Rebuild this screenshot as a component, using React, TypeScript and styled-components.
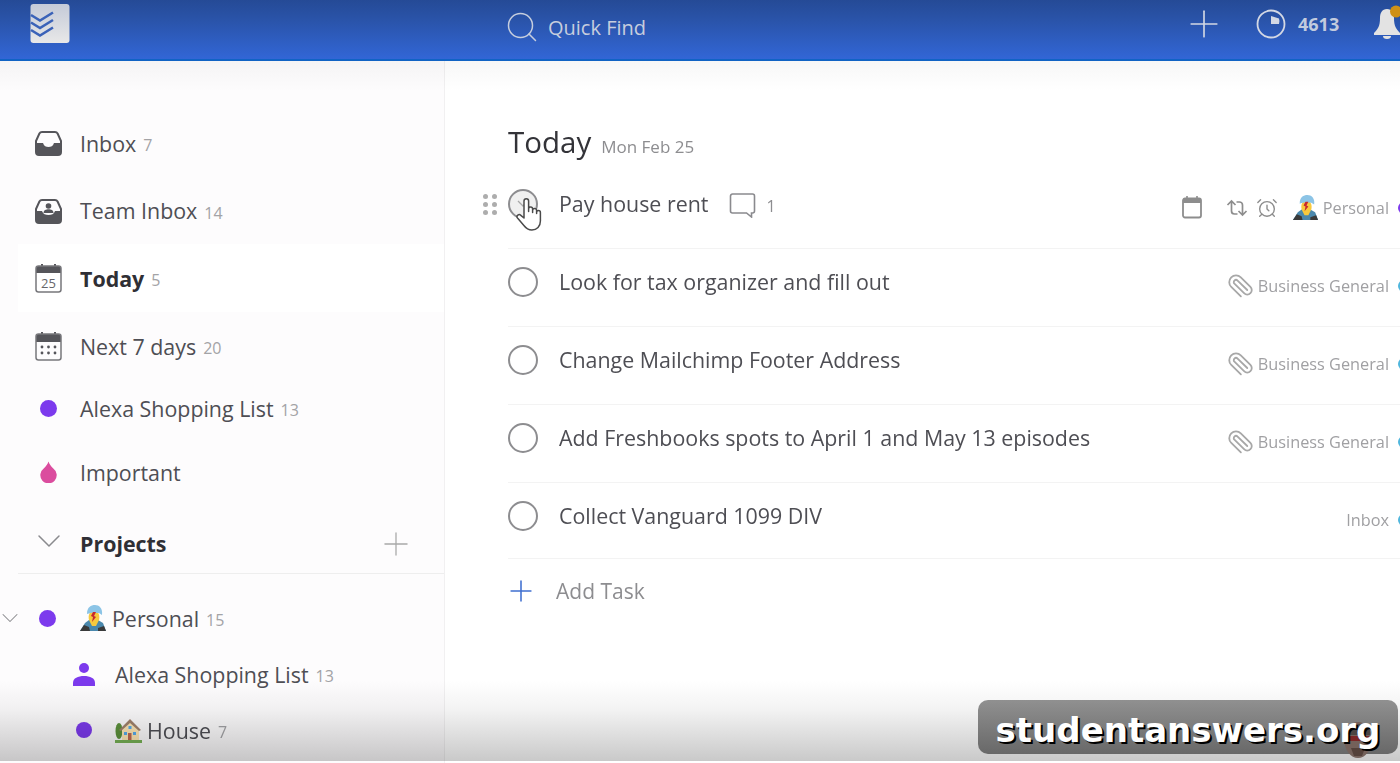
import React from "react";
import styled, { createGlobalStyle } from "styled-components";
import { AlarmClock, ChevronDown, Paperclip, Plus, Search } from "lucide-react";

const GlobalStyle = createGlobalStyle`
  html, body {
    margin: 0;
    padding: 0;
    height: 100%;
    overflow: hidden;
    background: #fff;
    font-family: "Open Sans", "Noto Sans", sans-serif;
  }
  svg {
    flex: none;
  }
`;

// drawings
const InboxIcon = () => (
  <svg width="27" height="26" viewBox="0 0 27 26">
    <path d="M7 2h13a3 3 0 0 1 2.6 1.5L26 11v11a3 3 0 0 1-3 3H4a3 3 0 0 1-3-3V11l3.4-7.5A3 3 0 0 1 7 2z" fill="none" stroke="#55555a" strokeWidth="2" />
    <path d="M1 13h7c1 3 3 4 5.500 4s4.500-1 5.500-4h7v9a3 3 0 0 1-3 3H4a3 3 0 0 1-3-3z" fill="#55555a" />
  </svg>
);

const TeamInboxIcon = () => (
  <svg width="27" height="26" viewBox="0 0 27 26">
    <path d="M7 2h13a3 3 0 0 1 2.600 1.500L26 11v11a3 3 0 0 1-3 3H4a3 3 0 0 1-3-3V11l3.400-7.500A3 3 0 0 1 7 2z" fill="none" stroke="#55555a" strokeWidth="2" />
    <path d="M1 13h6c1 3 3.500 4 6.500 4s5.500-1 6.500-4h6v9a3 3 0 0 1-3 3H4a3 3 0 0 1-3-3z" fill="#55555a" />
    <circle cx="13.500" cy="8" r="2.800" fill="#55555a" />
    <path d="M8.500 15c0-3 2.500-3.800 5-3.800s5 .8 5 3.800z" fill="#55555a" />
  </svg>
);

const TodayIcon = () => (
  <svg width="27" height="30" viewBox="0 0 27 30">
    <path d="M7 1v4M20 1v4" stroke="#55555a" strokeWidth="2" />
    <path d="M3 3h21a2 2 0 0 1 2 2v5H1V5a2 2 0 0 1 2-2z" fill="#55555a" />
    <rect x="1" y="3" width="25" height="26" rx="2.500" fill="none" stroke="#77777b" strokeWidth="1.500" />
    <text x="13.500" y="25" textAnchor="middle" fontFamily="Open Sans, sans-serif" fontSize="13" fill="#66666a">25</text>
  </svg>
);

const WeekIcon = () => (
  <svg width="27" height="30" viewBox="0 0 27 30">
    <path d="M7 1v4M20 1v4" stroke="#55555a" strokeWidth="2" />
    <path d="M3 3h21a2 2 0 0 1 2 2v6H1V5a2 2 0 0 1 2-2z" fill="#55555a" />
    <rect x="1" y="3" width="25" height="26" rx="2.500" fill="none" stroke="#77777b" strokeWidth="1.500" />
    {[7, 13.500, 20].map((x) =>
      [16, 22].map((y) => <circle key={`${x}-${y}`} cx={x} cy={y} r="1.400" fill="#55555a" />)
    )}
  </svg>
);

const Drop = () => (
  <svg width="17" height="22" viewBox="0 0 17 22">
    <path d="M8.500 0.500c1 3 2.200 4.300 4.800 7A8.200 8.200 0 1 1 3.700 7.500C6.300 4.800 7.500 3.500 8.500 0.500z" fill="#db4c9e" />
  </svg>
);

const PersonGlyph = () => (
  <svg width="24" height="24" viewBox="0 0 24 24">
    <circle cx="12" cy="6" r="5" fill="#7c3aed" />
    <path d="M1 24v-3c0-5 5-7 11-7s11 2 11 7v3z" fill="#7c3aed" />
  </svg>
);

const PersonEmoji = ({ size }: { size: number }) => (
  <svg width={size} height={size} viewBox="0 0 28 28">
    <path d="M1 27l5-8 4-3h9l5 3 3 8z" fill="#4a88ad" />
    <path d="M1 27l4-6 5 2 1 4z" fill="#3a3a3a" />
    <path d="M27 27l-2-5-6 2v3z" fill="#3a3a3a" />
    <path d="M10 16c-1-4 0-9 5-9s6 5 5 9l-3 6h-4z" fill="#f7c93e" />
    <path d="M8 10C8 3 12 1 16 1s8 3 7 10l-3-2c-3 0-7-1-12 1z" fill="#8cc4e6" />
    <path d="M14 8l3 0-2 4 2 1-4 5 1-5-2-1z" fill="#c8282d" />
  </svg>
);

const HouseEmoji = () => (
  <svg width="27" height="25" viewBox="0 0 27 25">
    <ellipse cx="4" cy="13" rx="3.500" ry="8" fill="#5c913b" />
    <path d="M7 23V11l8-8 9 8v12z" fill="#ffe8b6" />
    <path d="M4 12L15 1l11 11-2 1-9-8-9 8z" fill="#a0826d" />
    <rect x="13" y="15" width="3.500" height="8" fill="#c1694f" />
    <rect x="9" y="14" width="3" height="3" fill="#55acee" />
    <rect x="18" y="14" width="3" height="3" fill="#55acee" />
    <rect x="13.500" y="8" width="3" height="3" fill="#55acee" />
    <rect x="0" y="22" width="27" height="3" fill="#77b255" />
  </svg>
);

const Logo = () => (
  <svg width="40" height="39" viewBox="0 0 40 39">
    <defs>
      <linearGradient id="logoFill" x1="0" y1="0" x2="0" y2="1">
        <stop offset="0" stopColor="#c4cad8" />
        <stop offset="1" stopColor="#e8e8e8" />
      </linearGradient>
    </defs>
    <rect x="0.500" y="0" width="39" height="39" rx="3" fill="url(#logoFill)" />
    <path d="M1 11l9 5.500 13-8M1 18.500l9 5.500 13-8M1 26l9 5.500 13-8" fill="none" stroke="#3a62b8" strokeWidth="2.600" />
  </svg>
);

const KarmaIcon = () => (
  <svg width="30" height="30" viewBox="0 0 30 30">
    <circle cx="15" cy="15" r="13.500" fill="none" stroke="#d3d8e4" strokeWidth="1.800" />
    <path d="M15 7l8 2.500a8 8 0 0 1 0 5.500h-8z" fill="#d3d8e4" />
  </svg>
);

const BellIcon = () => (
  <svg width="26" height="34" viewBox="0 -4 26 34">
    <path d="M13 0c5 0 7 4 7 9 0 8 2 11 6 15v2H0v-2c4-4 6-7 6-15 0-5 2-9 7-9z" fill="#e3e3e3" />
    <path d="M9 27h8a4 3 0 0 1-8 0z" fill="#e3e3e3" />
    <circle cx="22" cy="2.500" r="6" fill="#cf9117" />
  </svg>
);

const CalendarIcon = () => (
  <svg width="20" height="23" viewBox="0 0 20 23">
    <path d="M5 0v3M15 0v3" stroke="#8d8d8d" strokeWidth="1.600" />
    <rect x="1" y="2.500" width="18" height="19" rx="2" fill="none" stroke="#8d8d8d" strokeWidth="1.800" />
    <rect x="1" y="2.500" width="18" height="4.500" fill="#8d8d8d" />
  </svg>
);

const RepeatIcon = () => (
  <svg width="22" height="18" viewBox="0 0 22 18">
    <path d="M1.500 6l4-4 4 4M5.500 2v10a3 3 0 0 0 3 3h3M20.500 12l-4 4-4-4M16.500 16V6a3 3 0 0 0-3-3h-3" fill="none" stroke="#8d8d8d" strokeWidth="1.700" />
  </svg>
);

const CommentIcon = () => (
  <svg width="27" height="25" viewBox="0 0 27 25">
    <path d="M3.500 1h20a2 2 0 0 1 2 2v15a2 2 0 0 1-2 2h-1v4l-5-4h-14a2 2 0 0 1-2-2V3a2 2 0 0 1 2-2z" fill="none" stroke="#8a8a8e" strokeWidth="1.600" />
  </svg>
);

const HandIcon = () => (
  <svg width="26" height="34" viewBox="0 0 26 34">
    <path
      d="M8 21V4a2.300 2.300 0 0 1 4.600 0v10.500V12a2 2 0 0 1 4 0v3.500V13.500a2 2 0 0 1 4 0v3V15.500a1.900 1.900 0 0 1 3.800 0V24c0 5.500-3.500 9-8.500 9-4 0-6-1.800-8-4.500L1.500 21a2.100 2.100 0 0 1 3.300-2.600z"
      fill="#fff"
      stroke="#4a4a4a"
      strokeWidth="1.500"
      strokeLinejoin="round"
    />
  </svg>
);

const Face = () => (
  <svg width="28" height="37" viewBox="0 0 28 37">
    <ellipse cx="14" cy="19" rx="13.500" ry="18" fill="#74615a" />
    <path d="M2 9C6 1 22 1 26 9L26 14H2z" fill="#4c4542" />
    <rect x="3" y="15" width="22" height="5" fill="#7c2525" />
    <path d="M7 27h14l-3 8h-8z" fill="#54413a" />
  </svg>
);

// header
const Frame = styled.div`
  display: flex;
  flex-direction: column;
  height: 100%;
  filter: blur(0.4px);
`;

const Header = styled.header`
  flex: none;
  height: 61px;
  box-sizing: border-box;
  border-bottom: 2px solid #1163c4;
  background: linear-gradient(#254a96, #2a54aa 35%, #3266d6);
  display: flex;
  align-items: center;
  overflow: hidden;
  padding-bottom: 5px;
`;

const LogoSlot = styled.div`
  flex: none;
  align-self: flex-start;
  width: 504px;
  box-sizing: border-box;
  padding: 4px 0 0 30px;
  display: flex;
`;

const SearchBox = styled.div`
  flex: 1;
  display: flex;
  align-items: center;
  gap: 8px;
  color: #c6cede;
  font-size: 20px;
`;

const HeaderTools = styled.div`
  flex: none;
  width: 218px;
  padding-bottom: 6px;
  display: flex;
  align-items: center;
  color: #d3d8e4;
`;

const KarmaCount = styled.span`
  margin-left: 12px;
  margin-right: 35px;
  font-size: 18px;
  font-weight: 700;
  color: #c2cbde;
`;

const AddGap = styled.span`
  display: flex;
  margin-right: 30px;
`;

const BellSlot = styled.span`
  display: flex;
  margin-bottom: 4px;
`;

// page
const Page = styled.div`
  width: 1400px;
  height: 763px;
  position: relative;
  overflow: hidden;
  background: #fff;
`;

const Body = styled.div`
  flex: 1;
  display: flex;
  min-height: 0;
  position: relative;
`;

const Sidebar = styled.nav`
  flex: none;
  width: 445px;
  height: 100%;
  padding-top: 48px;
  box-sizing: border-box;
  background: #fdfcfd;
  border-right: 1px solid #f1f0f1;
`;

const NavRow = styled.div<{ $h: number; $left?: number; $active?: boolean }>`
  height: ${(p) => p.$h}px;
  display: flex;
  align-items: center;
  padding-left: ${(p) => (p.$active ? 17 : p.$left ?? 35)}px;
  margin-left: ${(p) => (p.$active ? 18 : 0)}px;
  background: ${(p) => (p.$active ? "#ffffff" : "transparent")};
`;

const IconSlot = styled.span`
  flex: none;
  width: 27px;
  margin-right: 18px;
  display: flex;
  align-items: center;
  justify-content: center;
`;

const SubSlot = styled(IconSlot)`
  width: 24px;
  margin-right: 19px;
`;

const Dot = styled.span<{ $size?: number }>`
  display: block;
  width: ${(p) => p.$size ?? 17}px;
  height: ${(p) => p.$size ?? 17}px;
  border-radius: 50%;
  background: #7c3aed;
`;

const TreeChevron = styled.span`
  flex: none;
  width: 17px;
  margin-right: 16px;
  display: flex;
  justify-content: center;
  color: #8a8a8e;
`;

const Label = styled.span<{ $bold?: boolean }>`
  font-size: 21.4px;
  font-weight: ${(p) => (p.$bold ? 700 : 400)};
  color: ${(p) => (p.$bold ? "#2f2f35" : "#4e4e54")};
  white-space: nowrap;
`;

const Count = styled.span`
  margin-left: 7px;
  font-size: 16px;
  padding-top: 4px;
  color: #a3a3a6;
`;

const ProjectsRow = styled.div`
  height: 60px;
  margin: 6px 0 16px 18px;
  padding: 0 29px 0 17px;
  box-sizing: border-box;
  display: flex;
  align-items: center;
  border-bottom: 1px solid #eeeeee;
  color: #8a8a8e;
`;

const ProjectsChevron = styled.span`
  flex: none;
  width: 27px;
  margin-right: 18px;
  margin-top: -6px;
  display: flex;
  justify-content: center;
`;

const Spacer = styled.span`
  flex: 1;
`;

const EmojiLabel = styled.span`
  display: flex;
  margin-right: 5px;
`;

// main list
const Main = styled.main`
  flex: 1;
  min-width: 0;
  padding: 60px 0 0 63px;
  overflow: hidden;
`;

const TitleRow = styled.div`
  display: flex;
  align-items: baseline;
  gap: 10px;
  height: 50px;
`;

const Title = styled.h1`
  margin: 0;
  font-size: 29.500px;
  font-weight: 400;
  color: #333338;
`;

const TitleDate = styled.span`
  font-size: 17px;
  color: #8d8d90;
`;

const Task = styled.div<{ $h: number }>`
  width: 900px;
  height: ${(p) => p.$h}px;
  padding-bottom: ${(p) => p.$h - 66}px;
  box-sizing: border-box;
  display: flex;
  align-items: center;
  border-bottom: 1px solid #f3f3f3;
  position: relative;
`;

const Check = styled.span`
  flex: none;
  width: 26px;
  height: 26px;
  margin-right: 21px;
  border: 2px solid #8d8d90;
  border-radius: 50%;
  display: flex;
  align-items: center;
  justify-content: center;
`;

const HoverCheck = styled(Check)`
  background: #f0f0f0;
  color: #a8a8a8;
`;

const TaskText = styled.span`
  font-size: 21.4px;
  color: #4e4e54;
  white-space: nowrap;
`;

const Comment = styled.span`
  margin-left: 21px;
  margin-top: 4px;
  display: flex;
  align-items: center;
  gap: 10px;
  color: #8d8d90;
  font-size: 16px;
`;

const Meta = styled.span`
  margin-left: auto;
  margin-right: 9px;
  padding-top: 8px;
  display: flex;
  align-items: center;
  color: #a0a0a3;
  font-size: 16.300px;
  white-space: nowrap;
`;

const MetaDot = styled.span<{ $color: string }>`
  flex: none;
  width: 12px;
  height: 12px;
  margin: 8px -2px 0 0;
  border-radius: 50%;
  background: ${(p) => p.$color};
`;

const MetaIcon = styled.span<{ $gap: number }>`
  display: flex;
  margin-right: ${(p) => p.$gap}px;
`;

const ClipTurn = styled.span`
  display: flex;
  transform: rotate(90deg);
`;

const Grip = styled.span`
  position: absolute;
  left: -25px;
  top: 23px;
  display: grid;
  grid-template-columns: 5px 5px;
  gap: 3px 4px;
`;

const GripDot = styled.span`
  width: 5px;
  height: 5px;
  border-radius: 50%;
  background: #adadad;
`;

const Hand = styled.span`
  position: absolute;
  left: 8px;
  top: 26px;
  display: flex;
`;

const AddTaskRow = styled.div`
  height: 64px;
  display: flex;
  align-items: center;
  gap: 18px;
  color: #8d8d90;
  font-size: 21px;
`;

const AddIcon = styled.span`
  display: flex;
  margin-left: -4px;
  color: #3f6fd0;
`;

// video frame on top
const TopShade = styled.div`
  position: absolute;
  left: 0;
  right: 0;
  top: 0;
  height: 30px;
  background: linear-gradient(#f7f7f7, #ffffff);
  mix-blend-mode: multiply;
  pointer-events: none;
`;

const BottomFade = styled.div`
  position: absolute;
  left: 0;
  right: 0;
  bottom: 2px;
  height: 80px;
  background: linear-gradient(#ffffff, #f3f3f3 35%, #c9c9c9);
  mix-blend-mode: multiply;
  pointer-events: none;
`;

const Watermark = styled.div`
  position: absolute;
  left: 978px;
  top: 700px;
  width: 420px;
  height: 54px;
  padding-top: 5px;
  box-sizing: border-box;
  border-radius: 10px;
  background: linear-gradient(#909090, #686868);
  display: flex;
  align-items: center;
  justify-content: center;
  font-family: "DejaVu Sans", sans-serif;
  font-weight: 700;
  font-size: 34px;
  color: #fff;
  text-shadow: 2px 2px 0 #000;
`;

const WatermarkText = styled.span`
  position: relative;
`;

const WatermarkFace = styled.span`
  position: absolute;
  left: 366px;
  top: 21px;
  display: flex;
`;

const Tasks = [
  { text: "Look for tax organizer and fill out", meta: "Business General", clip: true },
  { text: "Change Mailchimp Footer Address", meta: "Business General", clip: true },
  { text: "Add Freshbooks spots to April 1 and May 13 episodes", meta: "Business General", clip: true },
  { text: "Collect Vanguard 1099 DIV", meta: "Inbox", clip: false },
];

export default function App() {
  return (
    <Page>
      <GlobalStyle />
      <Frame>
        <Header>
          <LogoSlot>
            <Logo />
          </LogoSlot>
          <SearchBox>
            <Search size={36} strokeWidth={1} />
            <span>Quick Find</span>
          </SearchBox>
          <HeaderTools>
            <AddGap>
              <Plus size={44} strokeWidth={0.9} />
            </AddGap>
            <KarmaIcon />
            <KarmaCount>4613</KarmaCount>
            <BellSlot><BellIcon /></BellSlot>
          </HeaderTools>
        </Header>
        <Body>
          <Sidebar>
            <NavRow $h={68}>
              <IconSlot><InboxIcon /></IconSlot>
              <Label>Inbox</Label>
              <Count>7</Count>
            </NavRow>
            <NavRow $h={67}>
              <IconSlot><TeamInboxIcon /></IconSlot>
              <Label>Team Inbox</Label>
              <Count>14</Count>
            </NavRow>
            <NavRow $h={68} $active>
              <IconSlot><TodayIcon /></IconSlot>
              <Label $bold>Today</Label>
              <Count>5</Count>
            </NavRow>
            <NavRow $h={68}>
              <IconSlot><WeekIcon /></IconSlot>
              <Label>Next 7 days</Label>
              <Count>20</Count>
            </NavRow>
            <NavRow $h={56}>
              <IconSlot><Dot /></IconSlot>
              <Label>Alexa Shopping List</Label>
              <Count>13</Count>
            </NavRow>
            <NavRow $h={72}>
              <IconSlot><Drop /></IconSlot>
              <Label>Important</Label>
            </NavRow>
            <ProjectsRow>
              <ProjectsChevron><ChevronDown size={40} strokeWidth={0.9} /></ProjectsChevron>
              <Label $bold>Projects</Label>
              <Spacer />
              <Plus size={38} strokeWidth={0.8} color="#a8a8a8" />
            </ProjectsRow>
            <NavRow $h={56} $left={1}>
              <TreeChevron><ChevronDown size={28} strokeWidth={0.9} /></TreeChevron>
              <IconSlot><Dot /></IconSlot>
              <EmojiLabel><PersonEmoji size={28} /></EmojiLabel>
              <Label>Personal</Label>
              <Count>15</Count>
            </NavRow>
            <NavRow $h={56} $left={72}>
              <SubSlot><PersonGlyph /></SubSlot>
              <Label>Alexa Shopping List</Label>
              <Count>13</Count>
            </NavRow>
            <NavRow $h={56} $left={72}>
              <SubSlot><Dot $size={16} /></SubSlot>
              <EmojiLabel><HouseEmoji /></EmojiLabel>
              <Label>House</Label>
              <Count>7</Count>
            </NavRow>
          </Sidebar>
          <Main>
            <TitleRow>
              <Title>Today</Title>
              <TitleDate>Mon Feb 25</TitleDate>
            </TitleRow>
            <Task $h={78}>
              <Grip>
                {[0, 1, 2, 3, 4, 5].map((i) => <GripDot key={i} />)}
              </Grip>
              <HoverCheck>
                <svg width="12" height="8" viewBox="0 0 12 8">
                  <path d="M1 1l5 5 5-5" fill="none" stroke="currentColor" strokeWidth="1.300" />
                </svg>
              </HoverCheck>
              <Hand><HandIcon /></Hand>
              <TaskText>Pay house rent</TaskText>
              <Comment>
                <CommentIcon />
                1
              </Comment>
              <Meta>
                <MetaIcon $gap={24}><CalendarIcon /></MetaIcon>
                <MetaIcon $gap={8}><RepeatIcon /></MetaIcon>
                <MetaIcon $gap={14}><AlarmClock size={22} strokeWidth={1.5} color="#8d8d8d" /></MetaIcon>
                <MetaIcon $gap={4}><PersonEmoji size={27} /></MetaIcon>
                Personal
              </Meta>
              <MetaDot $color="#7c3aed" />
            </Task>
            {Tasks.map((t, i) => (
              <Task key={t.text} $h={i === 3 ? 76 : 78}>
                <Check />
                <TaskText>{t.text}</TaskText>
                <Meta>
                  {t.clip && (
                    <MetaIcon $gap={4}>
                      <ClipTurn><Paperclip size={27} strokeWidth={1.6} color="#a8a8a8" /></ClipTurn>
                    </MetaIcon>
                  )}
                  {t.meta}
                </Meta>
                <MetaDot $color="#4fb6dd" />
              </Task>
            ))}
            <AddTaskRow>
              <AddIcon><Plus size={34} strokeWidth={1.1} /></AddIcon>
              <span>Add Task</span>
            </AddTaskRow>
          </Main>
          <TopShade />
          <BottomFade />
        </Body>
      </Frame>
      <Watermark>
        <WatermarkFace><Face /></WatermarkFace>
        <WatermarkText>studentanswers.org</WatermarkText>
      </Watermark>
    </Page>
  );
}
